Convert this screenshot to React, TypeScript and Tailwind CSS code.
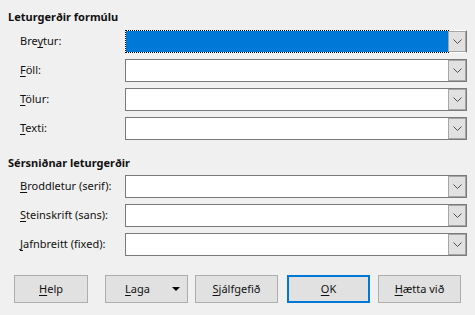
import type { ReactNode } from "react";

const formulaFonts = [
  { pre: "Bre", key: "y", post: "tur:", focused: true },
  { pre: "", key: "F", post: "öll:" },
  { pre: "", key: "T", post: "ölur:" },
  { pre: "", key: "T", post: "exti:" },
];

const customFonts = [
  { pre: "", key: "B", post: "roddletur (serif):" },
  { pre: "", key: "S", post: "teinskrift (sans):" },
  { pre: "", key: "J", post: "afnbreitt (fixed):" },
];

function Mnemonic({ pre, k, post }: { pre: string; k: string; post: string }) {
  return (
    <span>
      {pre}
      <span className="underline underline-offset-2">{k}</span>
      {post}
    </span>
  );
}

function Chevron() {
  return (
    <svg width="9" height="5" viewBox="0 0 9 5" className="text-[#505050]">
      <path d="M0.5 0.5 L4.5 4.5 L8.5 0.5" fill="none" stroke="currentColor" strokeWidth="1" />
    </svg>
  );
}

function Combo({ focused }: { focused?: boolean }) {
  return (
    <div
      className={
        "flex h-[23px] border " +
        (focused ? "border-white border-r-[#7a7a7a]" : "border-[#7a7a7a]")
      }
    >
      <div
        className={
          "flex-1 " +
          (focused
            ? "bg-[#0078d7] outline outline-1 outline-dotted outline-black"
            : "bg-white")
        }
      />
      <div className="w-[18px] flex items-center justify-center bg-[#e1e1e1] border border-[#a6a6a6]">
        <Chevron />
      </div>
    </div>
  );
}

function Row({ label, focused }: { label: ReactNode; focused?: boolean }) {
  return (
    <>
      <div className="flex items-center h-[23px]">{label}</div>
      <Combo focused={focused} />
    </>
  );
}

function Btn({
  children,
  className = "",
  primary,
}: {
  children: ReactNode;
  className?: string;
  primary?: boolean;
}) {
  return (
    <div
      className={
        "h-[28px] flex items-center justify-center bg-[#e1e1e1] " +
        (primary ? "border-2 border-[#0078d7] " : "border border-[#adadad] ") +
        className
      }
    >
      {children}
    </div>
  );
}

export default function App() {
  return (
    <div
      className="w-[475px] h-[315px] bg-[#f0f0f0] text-[#111] text-[11px] px-2 pt-2 overflow-hidden"
      style={{ fontFamily: '"Noto Sans", "Open Sans", sans-serif' }}
    >
      <div className="h-[18px] flex items-center font-bold">Leturgerðir formúlu</div>
      <div className="grid grid-cols-[105px_1fr] gap-y-[6px] pl-3 mt-[4px]">
        {formulaFonts.map((f, i) => (
          <Row
            key={i}
            focused={f.focused}
            label={<Mnemonic pre={f.pre} k={f.key} post={f.post} />}
          />
        ))}
      </div>

      <div className="h-[18px] flex items-center font-bold mt-[14px]">Sérsniðnar leturgerðir</div>
      <div className="grid grid-cols-[105px_1fr] gap-y-[6px] pl-3 mt-[3px]">
        {customFonts.map((f, i) => (
          <Row key={i} label={<Mnemonic pre={f.pre} k={f.key} post={f.post} />} />
        ))}
      </div>

      <div className="flex mt-[19px] pl-[6px]">
        <Btn className="w-[74px]">
          <Mnemonic pre="" k="H" post="elp" />
        </Btn>
        <Btn className="w-[83px] ml-[17px] relative pr-[18px]">
          <Mnemonic pre="" k="L" post="aga" />
          <span className="absolute right-[7px] top-[11px] w-0 h-0 border-l-[4px] border-r-[4px] border-t-[4px] border-l-transparent border-r-transparent border-t-black" />
        </Btn>
        <Btn className="w-[83px] ml-[7px]">
          <Mnemonic pre="" k="S" post="jálfgefið" />
        </Btn>
        <Btn className="w-[83px] ml-[9px]" primary>
          <Mnemonic pre="" k="O" post="K" />
        </Btn>
        <Btn className="w-[83px] ml-[8px]">
          <Mnemonic pre="" k="H" post="ætta við" />
        </Btn>
      </div>
    </div>
  );
}
